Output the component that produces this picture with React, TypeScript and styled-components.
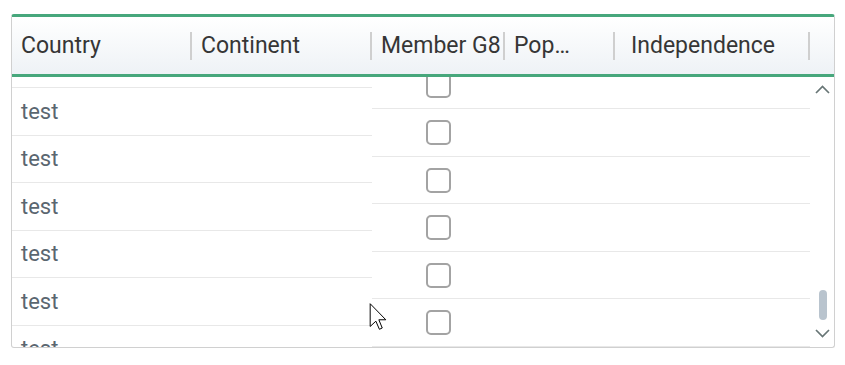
import React from "react";
import styled, { createGlobalStyle } from "styled-components";

const GlobalStyle = createGlobalStyle`
    body{
        margin:0;
        background:#ffffff;
        font-family:Roboto, "Liberation Sans", sans-serif;
    }
`;

const ROW_HEIGHT = 47.5;

const Page = styled.div`
    position:relative;
    padding:14px 0 0 11px;
`;

const Grid = styled.div`
    width:824px;
    box-sizing:border-box;
    border:1px solid #d0d0d0;
    border-top:3px solid #47a77c;
    border-radius:3px;
    overflow:hidden;
`;

const Header = styled.div`
    display:flex;
    height:57px;
    border-bottom:3px solid #47a77c;
    background:linear-gradient(#ffffff, #eef2f6);
`;

const HeaderCell = styled.div<{ $width: number; $indent?: number }>`
    width:${props => props.$width}px;
    flex:none;
    display:flex;
    align-items:center;
    padding-left:${props => props.$indent ?? 9}px;
    box-sizing:border-box;
`;

// a label with a $max gets a fixed width and is cut with an ellipsis
const Label = styled.span<{ $max?: number }>`
    flex:${props => props.$max ? `0 0 ${props.$max}px` : '1'};
    font-size:23px;
    color:#363636;
    white-space:nowrap;
    overflow:hidden;
    text-overflow:ellipsis;
`;

const Separator = styled.div`
    width:2px;
    height:28px;
    flex:none;
    background:#cfcfcf;
    margin-top:1px;
`;

const Body = styled.div`
    display:flex;
    height:270px;
    overflow:hidden;
`;

const Pane = styled.div<{ $width: number }>`
    width:${props => props.$width}px;
    flex:none;
    overflow:hidden;
`;

const List = styled.div<{ $offset: number }>`
    margin-top:${props => props.$offset}px;
`;

const Row = styled.div`
    display:flex;
    align-items:center;
    height:${ROW_HEIGHT}px;
    box-sizing:border-box;
    border-bottom:1px solid #e8e8e8;
`;

const TextCell = styled.div`
    padding-left:9px;
    font-size:22px;
    color:#5a6670;
`;

const CheckCell = styled.div<{ $width: number }>`
    width:${props => props.$width}px;
    flex:none;
    display:flex;
    justify-content:center;
    padding-top:1px;
`;

const Checkbox = styled.div`
    width:25px;
    height:25px;
    box-sizing:border-box;
    border:2px solid #a3a3a3;
    border-radius:5px;
    background:#ffffff;
`;

const ScrollBar = styled.div`
    width:24px;
    flex:none;
    display:flex;
    flex-direction:column;
    align-items:center;
    padding:8px 0 9px 0;
    box-sizing:border-box;
`;

const Spacer = styled.div`
    flex:1;
`;

const Thumb = styled.div`
    width:8px;
    height:30px;
    border-radius:4px;
    background:#b9c4ce;
    margin:0 0 9px 1px;
`;

const Cursor = styled.svg`
    position:absolute;
    left:369px;
    top:303px;
`;

const Chevron = ({ up }: { up?: boolean }) => (
    <svg width="15" height="9" viewBox="0 0 15 9">
        <polyline
            points={up ? "1,8 7.5,1.5 14,8" : "1,1 7.5,7.5 14,1"}
            fill="none"
            stroke="#687676"
            strokeWidth="1.7"
        />
    </svg>
);

const columns = [
    { key: 'country', label: 'Country', width: 180 },
    { key: 'continent', label: 'Continent', width: 180 },
    { key: 'g8', label: 'Member G8', width: 133 },
    { key: 'pop', label: 'Population', width: 110, max: 60 },
    { key: 'indep', label: 'Independence', width: 195, indent: 16 },
];

const rows = Array.from({ length: 7 }, (_, i) => i);

const App = () => {
    return (
        <Page>
            <GlobalStyle />
            <Grid>
                <Header>
                    {columns.map(col => (
                        <HeaderCell key={col.key} $width={col.width} $indent={col.indent}>
                            <Label $max={col.max}>{col.label}</Label>
                            {col.max && <Spacer />}
                            <Separator />
                        </HeaderCell>
                    ))}
                </Header>
                <Body>
                    <Pane $width={360}>
                        <List $offset={-36.5}>
                            {rows.map(i => (
                                <Row key={i}>
                                    <TextCell>test</TextCell>
                                </Row>
                            ))}
                        </List>
                    </Pane>
                    <Pane $width={438}>
                        <List $offset={-15.5}>
                            {rows.map(i => (
                                <Row key={i}>
                                    <CheckCell $width={133}>
                                        <Checkbox />
                                    </CheckCell>
                                </Row>
                            ))}
                        </List>
                    </Pane>
                    <ScrollBar>
                        <Chevron up />
                        <Spacer />
                        <Thumb />
                        <Chevron />
                    </ScrollBar>
                </Body>
            </Grid>
            <Cursor width="18" height="27" viewBox="0 0 12 19">
                <path
                    d="M0.5 0.5 V16.5 L4.5 12.8 L7 18.5 L9 17.6 L6.6 11.8 H11.5 Z"
                    fill="#ffffff"
                    stroke="#000000"
                    strokeWidth="0.7"
                    strokeLinejoin="round"
                />
            </Cursor>
        </Page>
    );
};

export default App;
